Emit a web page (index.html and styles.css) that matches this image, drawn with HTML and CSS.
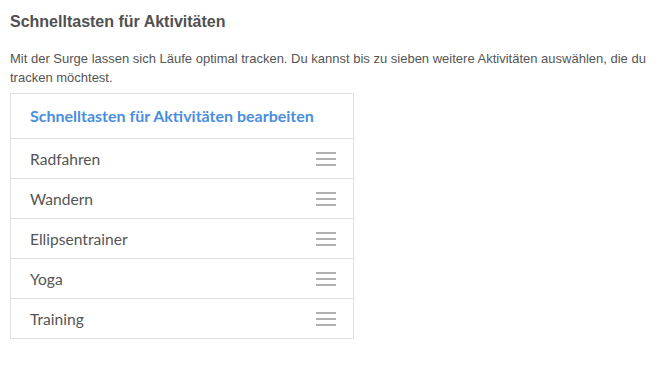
FILE: index.html
```html
<!DOCTYPE html>
<html lang="de">
<head>
    <meta charset="UTF-8">
    <title>Schnelltasten für Aktivitäten</title>
    <link rel="stylesheet" href="styles.css">
</head>
<body>
    <div class="section">
        <h2 class="title">Schnelltasten für Aktivitäten</h2>
        <p class="intro">Mit der Surge lassen sich Läufe optimal tracken. Du kannst bis zu sieben weitere Aktivitäten auswählen, die du tracken möchtest.</p>

        <div class="list">
            <div class="list-head">Schnelltasten für Aktivitäten bearbeiten</div>
            <div class="row"><span>Radfahren</span><span class="handle"><i></i><i></i><i></i></span></div>
            <div class="row"><span>Wandern</span><span class="handle"><i></i><i></i><i></i></span></div>
            <div class="row"><span>Ellipsentrainer</span><span class="handle"><i></i><i></i><i></i></span></div>
            <div class="row"><span>Yoga</span><span class="handle"><i></i><i></i><i></i></span></div>
            <div class="row"><span>Training</span><span class="handle"><i></i><i></i><i></i></span></div>
        </div>
    </div>
</body>
</html>
```

FILE: styles.css
```css
body {
    margin: 0;
    background: #ffffff;
    font-family: "Liberation Sans", Arial, sans-serif;
    color: #555555;
}

.section {
    padding: 12px 10px 0 10px;
}

.title {
    margin: 0;
    font-size: 16px;
    line-height: 20px;
    font-weight: bold;
    color: #505050;
}

.intro {
    margin: 17px 0 0 0;
    font-size: 13px;
    line-height: 19px;
    color: #555555;
}

.list {
    margin-top: 6px;
    width: 342px;
    border: 1px solid #e0e0e0;
}

.list-head {
    height: 44px;
    line-height: 44px;
    padding-left: 19px;
    font-family: Lato, "Open Sans", sans-serif;
    font-size: 16px;
    font-weight: bold;
    color: #4a8ee0;
}

.row {
    height: 39px;
    border-top: 1px solid #e0e0e0;
    display: flex;
    align-items: center;
    justify-content: space-between;
    padding: 0 17px 0 19px;
    font-family: Lato, "Open Sans", sans-serif;
    font-size: 15.6px;
    color: #555555;
}

.handle {
    display: flex;
    flex-direction: column;
    gap: 4px;
    width: 20px;
}

.handle i {
    display: block;
    height: 2px;
    background: #b0b0b0;
}
```
